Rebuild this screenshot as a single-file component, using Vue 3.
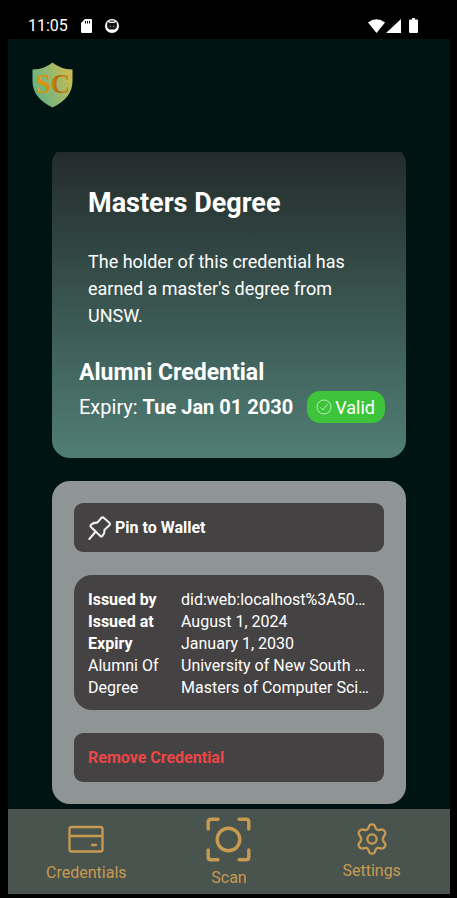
<script setup>
const details = [
  { label: 'Issued by', value: 'did:web:localhost%3A50…', strong: true },
  { label: 'Issued at', value: 'August 1, 2024', strong: true },
  { label: 'Expiry', value: 'January 1, 2030', strong: true },
  { label: 'Alumni Of', value: 'University of New South …', strong: false },
  { label: 'Degree', value: 'Masters of Computer Sci…', strong: false },
]
</script>

<template>
  <div class="device">
    <div class="status">
      <span class="time">11:05</span>
      <svg class="sd" viewBox="0 0 11 14" aria-hidden="true">
        <path d="M4 0H10Q11 0 11 1V13Q11 14 10 14H1Q0 14 0 13V4Z" fill="#fff" />
        <path d="M4.500 2V4.500M6.500 2V4.500M8.500 2V4.500" stroke="#000" stroke-width="1" />
      </svg>
      <svg class="face" viewBox="0 0 14 14" aria-hidden="true">
        <circle cx="7" cy="7" r="7" fill="#fff" />
        <path d="M2.600 2.800L4.800 4H9.200L11.400 2.800L12 6L11.500 9L9.500 10.500H4.500L2.500 9L2 6Z" fill="#151515" />
        <path d="M4 1.800Q7 0.600 10 1.800L9 3H5Z" fill="#555" />
        <path d="M4.500 7.500H6M8 7.500H9.500" stroke="#888" stroke-width="1" />
      </svg>
      <div class="signals">
        <svg class="wifi" viewBox="0 0 17 14" aria-hidden="true">
          <path d="M0 3.500Q8.500-3 17 3.500L8.500 14Z" fill="#fff" />
        </svg>
        <svg class="cell" viewBox="0 0 15 14" aria-hidden="true">
          <path d="M15 0V14H0Z" fill="#fff" />
        </svg>
        <svg class="battery" viewBox="0 0 9 15" aria-hidden="true">
          <path d="M3 0H6V1.500H8Q9 1.500 9 2.500V14Q9 15 8 15H1Q0 15 0 14V2.500Q0 1.500 1 1.500H3Z" fill="#fff" />
        </svg>
      </div>
    </div>

    <div class="app">
      <header class="header">
        <svg class="logo" viewBox="0 0 41 46" role="img" aria-label="SC">
          <defs>
            <linearGradient id="shield" x1="0" y1="0.700" x2="1" y2="0.200">
              <stop offset="0" stop-color="#5fb084" />
              <stop offset="0.500" stop-color="#93b870" />
              <stop offset="1" stop-color="#d0bc4c" />
            </linearGradient>
            <linearGradient id="letters" x1="0" y1="0" x2="1" y2="0">
              <stop offset="0" stop-color="#e39a08" />
              <stop offset="0.450" stop-color="#d18c0a" />
              <stop offset="0.600" stop-color="#b56c08" />
              <stop offset="1" stop-color="#c08a1c" />
            </linearGradient>
          </defs>
          <path
            d="M20.500 0.500Q28 7 40.500 7.500V19Q40.500 36 20.500 45.500Q0.500 36 0.500 19V7.500Q13 7 20.500 0.500Z"
            fill="url(#shield)"
          />
          <text class="logo-text" x="21" y="31" text-anchor="middle" fill="url(#letters)">SC</text>
        </svg>
      </header>

      <main class="scroll">
        <section class="credential">
          <div class="summary">
            <h1>Masters Degree</h1>
            <p>The holder of this credential has earned a master's degree from UNSW.</p>
          </div>
          <h2>Alumni Credential</h2>
          <div class="expiry">
            <span>Expiry: <b>Tue Jan 01 2030</b></span>
            <span class="valid">
              <svg viewBox="0 0 16 16" fill="none" stroke="#d9f5d7" stroke-width="0.800" aria-hidden="true">
                <circle cx="8" cy="8" r="7" />
                <path d="M4.500 8.500L7 11L11.500 5" />
              </svg>
              Valid
            </span>
          </div>
        </section>

        <section class="panel">
          <button class="action" type="button">
            <svg class="pin" viewBox="0 0 72 72" fill="none" stroke="#f2f2f2" stroke-width="6" stroke-linecap="round" stroke-linejoin="round" aria-hidden="true">
              <path d="M40 6Q44 2 48 6L64 20Q68 24 64 28L49 42Q51 52 43 60Q40 63 37 60L8 32Q6 29 9 26Q17 19 28 20Z" />
              <path d="M4 69L22 48" />
            </svg>
            Pin to Wallet
          </button>

          <dl class="details">
            <template v-for="item in details" :key="item.label">
              <dt :class="{ strong: item.strong }">{{ item.label }}</dt>
              <dd>{{ item.value }}</dd>
            </template>
          </dl>

          <button class="action danger" type="button">Remove Credential</button>
        </section>
      </main>

      <nav class="tabs">
        <a href="#credentials">
          <svg class="card-icon" viewBox="0 -1 36 36" fill="none" stroke="currentColor" stroke-width="2.300" stroke-linecap="round" aria-hidden="true">
            <rect x="1.500" y="5" width="33" height="24.500" rx="2" />
            <path d="M2 14H34M24 23H28" />
          </svg>
          Credentials
        </a>
        <a href="#scan">
          <svg class="scan-icon" viewBox="0 0 45 45" fill="none" stroke="currentColor" stroke-width="3.400" stroke-linecap="round" aria-hidden="true">
            <path d="M2.200 12V5Q2.200 2.200 5 2.200H12M33 2.200H40Q42.800 2.200 42.800 5V12M42.800 33V40Q42.800 42.800 40 42.800H33M12 42.800H5Q2.200 42.800 2.200 40V33" />
            <circle cx="22.500" cy="22.500" r="11.300" />
          </svg>
          Scan
        </a>
        <a href="#settings">
          <svg class="gear-icon" viewBox="0 0 96 96" fill="none" stroke="currentColor" stroke-width="7" stroke-linejoin="round" aria-hidden="true">
            <path d="M48 4C52 4 55 5 56 8L59 16C61 20 65 22 69 21L78 19C82 19 84 21 87 26C89 30 89 32 87 35L83 40C80 45 80 51 83 56L87 61C89 64 89 66 87 70C84 75 82 77 78 77L69 75C65 74 61 76 59 80L56 88C55 91 52 92 48 92C44 92 41 91 40 88L37 80C35 76 31 74 27 75L18 77C14 77 12 75 9 70C7 66 7 64 9 61L13 56C16 51 16 45 13 40L9 35C7 32 7 30 9 26C12 21 14 19 18 19L27 21C31 22 35 20 37 16L40 8C41 5 44 4 48 4Z" />
            <circle cx="48" cy="48" r="14" />
          </svg>
          Settings
        </a>
      </nav>
    </div>
  </div>
</template>

<style>
body {
  background: #000;
}
</style>

<style scoped>
* {
  box-sizing: border-box;
}

.device {
  display: flex;
  flex-direction: column;
  min-height: 100vh;
  padding: 12px 7px 4px 8px;
  background: #000;
  color: #fff;
  font-family: Roboto, "Liberation Sans", sans-serif;
  font-size: 16px;
}

svg {
  display: block;
  flex: none;
}

.status {
  display: flex;
  align-items: center;
  height: 27px;
  padding: 0 32px 0 20px;
}

.time {
  margin-right: 13px;
}

.sd {
  width: 11px;
  height: 14px;
  margin-right: 13px;
}

.face {
  width: 14px;
  height: 14px;
}

.signals {
  display: flex;
  align-items: center;
  margin-left: auto;
}

.wifi {
  width: 17px;
  height: 14px;
}

.cell {
  width: 15px;
  height: 14px;
  margin: 0 8px 0 1px;
}

.battery {
  width: 9px;
  height: 15px;
}

.app {
  display: flex;
  flex: 1;
  flex-direction: column;
  background: #001413;
}

.header {
  height: 113px;
  padding: 23px 24px;
}

.logo {
  width: 41px;
  height: 46px;
}

.logo-text {
  font: bold 27px "Liberation Serif", serif;
}

.scroll {
  flex: 1;
  padding: 0 44px 5px;
  overflow: hidden;
}

.credential {
  margin-top: -6px;
  padding: 41px 21px 35px 27px;
  border-radius: 18px;
  background: linear-gradient(#222a29, #507e76);
}

.summary {
  padding: 0 9px;
}

h1,
h2,
p,
dl,
dd {
  margin: 0;
}

h1 {
  font-size: 27px;
  line-height: 32px;
}

p {
  padding: 29px 0;
  font-size: 18px;
  line-height: 27px;
}

h2 {
  font-size: 23px;
  line-height: 30px;
}

.expiry {
  display: flex;
  align-items: center;
  justify-content: space-between;
  margin-top: 3px;
  font-size: 20px;
  white-space: nowrap;
}

.valid {
  display: flex;
  align-items: center;
  gap: 3px;
  height: 32px;
  padding: 0 10px 0 9px;
  border-radius: 13px;
  background: #3ec43a;
  font-size: 18px;
}

.valid svg {
  width: 16px;
  height: 16px;
}

.panel {
  display: flex;
  flex-direction: column;
  gap: 23px;
  margin-top: 23px;
  padding: 22px;
  border-radius: 18px;
  background: #8f9594;
}

.action {
  display: flex;
  align-items: center;
  gap: 3px;
  height: 49px;
  padding: 0 14px;
  border: 0;
  border-radius: 9px;
  background: #454243;
  color: #fff;
  font: bold 16px Roboto, "Liberation Sans", sans-serif;
}

.danger {
  color: #ec4646;
}

.pin {
  width: 24px;
  height: 24px;
}

.details {
  display: grid;
  grid-template-columns: 93px 1fr;
  padding: 14px 8px 11px 14px;
  border-radius: 18px;
  background: #454243;
  line-height: 22px;
}

.strong {
  font-weight: bold;
}

dd {
  overflow: hidden;
  text-overflow: ellipsis;
  white-space: nowrap;
}

.tabs {
  display: grid;
  grid-template-columns: repeat(3, 1fr);
  align-items: center;
  height: 85px;
  padding: 0 7px;
  background: #49544f;
}

.tabs a {
  display: flex;
  flex-direction: column;
  align-items: center;
  gap: 7px;
  color: #c89a50;
  line-height: 18px;
  text-decoration: none;
}

.card-icon {
  width: 36px;
  height: 36px;
}

.scan-icon {
  width: 45px;
  height: 45px;
}

.gear-icon {
  width: 32px;
  height: 32px;
}
</style>
